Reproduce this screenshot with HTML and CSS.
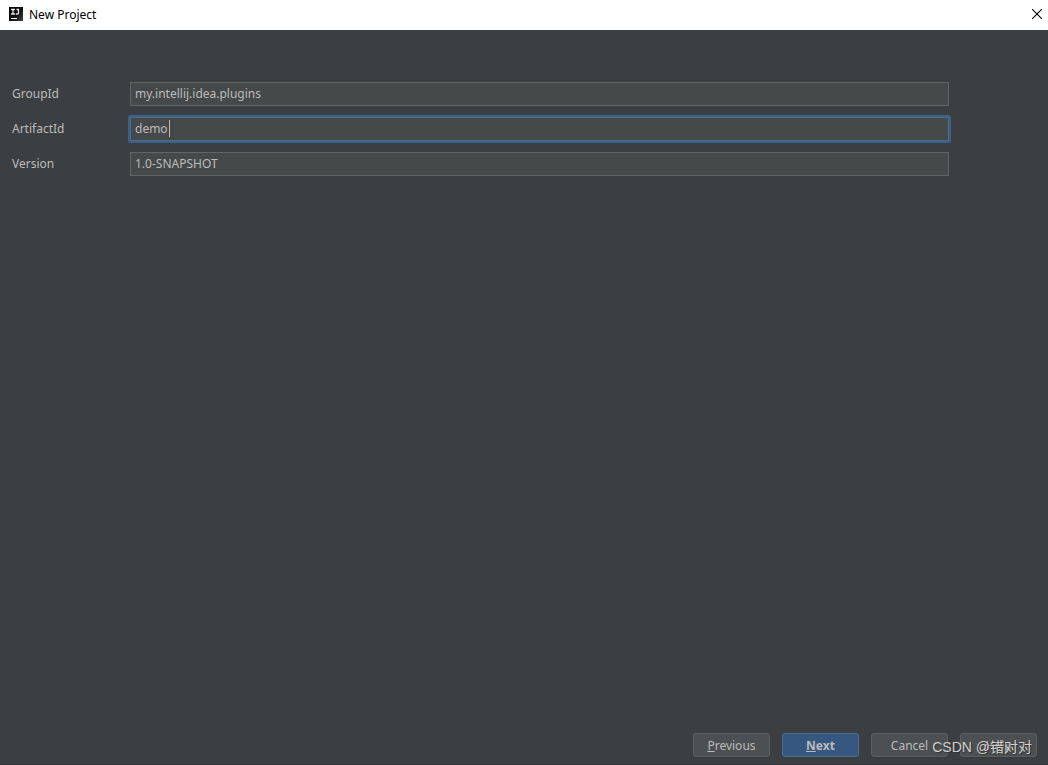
FILE: index.html
```html
<!DOCTYPE html>
<html lang="en">
<head>
<meta charset="utf-8">
<title>New Project</title>
<link rel="stylesheet" href="styles.css">
</head>
<body>
<div class="dialog">
  <header class="titlebar">
    <svg class="app-icon" width="14" height="14" viewBox="0 0 14 14" aria-hidden="true">
      <defs><linearGradient id="shade" x1="0" y1="0" x2="1" y2="1"><stop offset="0" stop-color="#000"/><stop offset=".55" stop-color="#111"/><stop offset="1" stop-color="#444"/></linearGradient></defs>
      <rect width="14" height="14" fill="url(#shade)"/>
      <path d="M2 2.5h4M4 2v5M2 7h4M7.5 2.5h2.5M9.5 2v4q0 1-1 1H6.8" fill="none" stroke="#e4e4e4" stroke-width="1.3"/>
      <path d="M2 11.5h6" stroke="#fff"/>
    </svg>
    <h1 class="title">New Project</h1>
    <button class="close" type="button" aria-label="Close">
      <svg width="10" height="10" viewBox="0 0 10 10" aria-hidden="true"><path d="M0 0L10 10M10 0L0 10" stroke="#000" stroke-width="1.1"/></svg>
    </button>
  </header>
  <form class="form">
    <div class="fields">
      <div class="row">
        <label for="group">GroupId</label>
        <div class="field"><input id="group" type="text" value="my.intellij.idea.plugins"></div>
      </div>
      <div class="row">
        <label for="artifact">ArtifactId</label>
        <div class="field"><input id="artifact" class="active" type="text" value="demo"><span class="caret"></span></div>
      </div>
      <div class="row">
        <label for="version">Version</label>
        <div class="field"><input id="version" type="text" value="1.0-SNAPSHOT"></div>
      </div>
    </div>
    <footer class="actions">
      <button class="btn" type="button"><u>P</u>revious</button>
      <button class="btn primary" type="button"><u>N</u>ext</button>
      <button class="btn" type="button">Cancel</button>
      <button class="btn" type="button">Help</button>
      <span class="watermark">CSDN @错对对</span>
    </footer>
  </form>
</div>
</body>
</html>
```
FILE: styles.css
```css
* { box-sizing: border-box; }
body {
  margin: 0;
  background: #3c3f41;
  color: #bbbbbb;
  font: 12px/16px "Noto Sans", "Open Sans", "Noto Sans CJK SC", sans-serif;
}
.dialog {
  display: flex;
  flex-direction: column;
  min-height: 100vh;
  border-bottom: 1px solid #343638;
}
.titlebar {
  display: flex;
  align-items: center;
  height: 30px;
  padding: 0 6px 2px 9px;
  background: #ffffff;
  color: #000000;
}
.title {
  flex: 1;
  margin: 0 0 0 6px;
  font-size: 12px;
  line-height: 18px;
  padding-top: 2px;
  font-weight: 400;
}
.close {
  display: flex;
  padding: 0;
  border: 0;
  background: none;
}
.form {
  display: flex;
  flex: 1;
  flex-direction: column;
  justify-content: space-between;
  padding: 52px 11px 7px 12px;
}
.fields {
  display: grid;
  gap: 11px;
  padding-right: 88px;
}
.row {
  display: grid;
  grid-template-columns: 118px 1fr;
  align-items: center;
}
.btn, input { font-size: 12px; }
.field { position: relative; display: flex; }
input {
  width: 100%;
  height: 24px;
  padding: 0 4px 1px;
  border: 1px solid #646464;
  border-radius: 0;
  outline: none;
  background: #45494a;
  color: #bbbbbb;
  font-family: inherit;
}
input.active {
  border-color: #466d94;
  box-shadow: 0 0 0 2px #3d6185;
  border-radius: 1px;
}
.caret {
  position: absolute;
  top: 3px;
  left: 39px;
  width: 1px;
  height: 17px;
  background: #bbbbbb;
}
.actions {
  position: relative;
  display: flex;
  justify-content: flex-end;
  gap: 12px;
}
.btn {
  width: 77px;
  height: 24px;
  padding: 0;
  border: 1px solid #5e6060;
  border-radius: 3px;
  background: #4c5052;
  box-shadow: 0 1px #36393a;
  color: #bbbbbb;
  font-family: inherit;
}
.primary {
  border-color: #4c708c;
  background: #365880;
  font-weight: 700;
}
.watermark {
  position: absolute;
  right: 5px;
  top: 4px;
  color: #d0d0d0;
  font: 14px/20px "Liberation Sans", "Noto Sans CJK SC", sans-serif;
  text-shadow: 1px 1px 1px #333333;
  white-space: nowrap;
}
```
